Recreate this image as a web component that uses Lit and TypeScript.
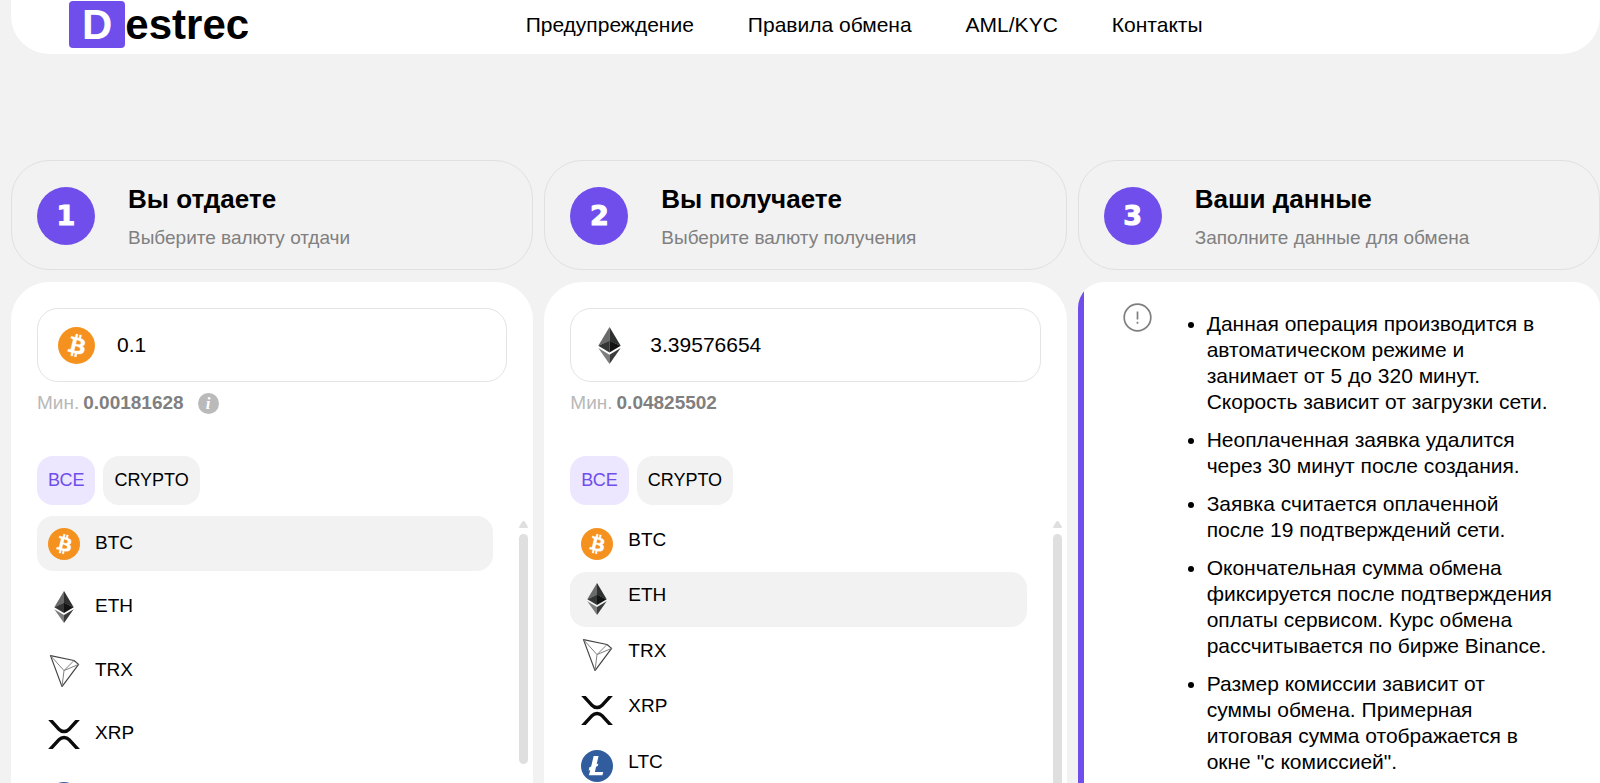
import { LitElement, html, css, svg } from "lit";
import { customElement, property, state } from "lit/decorators.js";
import { classMap } from "lit/directives/class-map.js";

const COINS = ["BTC", "ETH", "TRX", "XRP", "LTC"];

const RULES = [
  "Данная операция производится в автоматическом режиме и занимает от 5 до 320 минут. Скорость зависит от загрузки сети.",
  "Неоплаченная заявка удалится через 30 минут после создания.",
  "Заявка считается оплаченной после 19 подтверждений сети.",
  "Окончательная сумма обмена фиксируется после подтверждения оплаты сервисом. Курс обмена рассчитывается по бирже Binance.",
  'Размер комиссии зависит от суммы обмена. Примерная итоговая сумма отображается в окне "с комиссией".',
];

const SHAPES: Record<string, unknown> = {
  BTC: svg`<circle cx="16" cy="16" r="16" fill="#f5921f"/><path fill="#fff" stroke="#fff" stroke-width=".3" d="M23.189 14.02c.314-2.096-1.283-3.223-3.465-3.975l.708-2.84-1.728-.43-.69 2.765c-.454-.114-.92-.22-1.385-.326l.695-2.783L15.596 6l-.708 2.839c-.376-.086-.746-.17-1.104-.26l.002-.009-2.384-.595-.46 1.846s1.283.294 1.256.312c.7.175.826.638.805 1.006l-.806 3.235c.048.012.11.03.18.057l-.183-.045-1.13 4.532c-.086.212-.303.531-.793.41.018.025-1.256-.313-1.256-.313l-.858 1.978 2.25.561c.418.105.828.215 1.231.318l-.715 2.872 1.727.43.708-2.84c.472.127.93.245 1.378.357l-.706 2.828 1.728.43.715-2.866c2.948.558 5.164.333 6.097-2.333.752-2.146-.037-3.385-1.588-4.192 1.13-.26 1.98-1.003 2.207-2.538zm-3.95 5.538c-.533 2.147-4.148.986-5.32.695l.95-3.805c1.172.293 4.929.872 4.37 3.11zm.535-5.569c-.487 1.953-3.495.96-4.47.717l.86-3.45c.975.243 4.118.696 3.61 2.733z"/>`,
  ETH: svg`<path fill="#6a6a6a" d="M16 0 6.3 16.2 16 12z"/><path fill="#2f3030" d="M16 0v12l9.7 4.2z"/><path fill="#343535" d="M6.3 16.2 16 11.8V22z"/><path fill="#131313" d="M25.7 16.2 16 11.8V22z"/><path fill="#7d7d7d" d="M6.3 18.2 16 23.9V32z"/><path fill="#3a3b3b" d="M25.7 18.2 16 23.9V32z"/>`,
  TRX: svg`<path fill="none" stroke="#444" stroke-width="1.2" stroke-linejoin="round" d="M2.5.6 26 5.5l4.6 3.9L14 31.6z"/><path fill="none" stroke="#808080" stroke-width="1" stroke-linejoin="round" d="M2.5.6 16 15.6 26 5.5M16 15.6l14.6-6.2M16 15.6l-2 16"/>`,
  XRP: svg`<path transform="translate(-9.4 -12) scale(1.59 1.75)" fill="#0b0b0b" d="M23.07 8h2.89l-6.015 5.957a5.621 5.621 0 01-7.89 0L6.035 8H8.93l4.57 4.523a3.556 3.556 0 004.996 0L23.07 8zM8.895 24.563H6l6.055-5.993a5.621 5.621 0 017.89 0L26 24.563h-2.895L18.5 20a3.556 3.556 0 00-4.996 0l-4.61 4.563z"/>`,
  LTC: svg`<circle cx="16" cy="16" r="16" fill="#315d9e"/><path transform="translate(-3.2 -4.2) scale(1.2 1.26)" fill="#fff" d="M10.427 19.214L9 19.768l.688-2.759 1.444-.58L13.213 8h4.1l-1.6 6.6 1.41-.571-.5 2.1-1.427.571-.95 4.1H21.2L20.5 23.4H9.252z"/>`,
};

@customElement("coin-icon")
export class CoinIcon extends LitElement {
  static styles = css`
    :host {
      display: block;
      width: 32px;
      height: 32px;
      flex: none;
    }
    .shape {
      display: block;
      width: 100%;
      height: 100%;
    }
  `;
  @property() coin = "BTC";
  render() {
    return html`<svg class="shape" viewBox="0 0 32 32" aria-hidden="true">${SHAPES[this.coin]}</svg>`;
  }
}

@customElement("step-card")
export class StepCard extends LitElement {
  static styles = css`
    :host {
      display: flex;
      align-items: center;
      gap: 33px;
      box-sizing: border-box;
      height: 110px;
      padding: 2px 25px 0;
      border: 1px solid #e0e0e0;
      border-radius: 38px;
    }
    .number {
      display: grid;
      place-items: center;
      flex: none;
      width: 58px;
      height: 58px;
      border-radius: 50%;
      background: #6f4eec;
      color: #fff;
      font: bold 27px/58px "DejaVu Sans", sans-serif;
      -webkit-text-stroke: 1px #fff;
    }
    .title {
      margin: 0 0 13px;
      font-size: 26px;
      line-height: 30px;
      font-weight: bold;
    }
    .hint {
      margin: 0;
      color: #808080;
      font-size: 19px;
      line-height: 22px;
    }
  `;
  @property() number = "";
  @property() heading = "";
  @property() hint = "";
  render() {
    return html`
      <span class="number">${this.number}</span>
      <div>
        <h2 class="title">${this.heading}</h2>
        <p class="hint">${this.hint}</p>
      </div>
    `;
  }
}

@customElement("currency-panel")
export class CurrencyPanel extends LitElement {
  static styles = css`
    :host {
      display: block;
      box-sizing: border-box;
      padding: 26px 26px 0;
      border-radius: 38px 38px 0 0;
      background: #fff;
    }
    .field {
      display: flex;
      align-items: center;
      gap: 22px;
      box-sizing: border-box;
      height: 74px;
      padding: 0 20px;
      border: 1px solid #e4e4e4;
      border-radius: 21px;
    }
    .field-icon {
      width: 37px;
      height: 37px;
    }
    .amount {
      flex: 1;
      min-width: 0;
      padding: 0;
      border: 0;
      outline: 0;
      background: none;
      color: #000;
      font: inherit;
      font-size: 21px;
    }
    .minimum {
      display: flex;
      align-items: center;
      height: 22px;
      margin: 10px 0 42px;
      color: #b8b8b8;
      font-size: 19px;
    }
    .minimum-value {
      margin-left: 4px;
      color: #808080;
    }
    .info {
      width: 21px;
      height: 21px;
      margin-left: 14px;
      padding: 0;
      border: 0;
      border-radius: 50%;
      background: #bababa;
      color: #fff;
      font: italic bold 17px/21px "Liberation Serif", serif;
    }
    .tabs {
      display: flex;
      gap: 8px;
      margin-bottom: 11px;
    }
    .tab {
      height: 49px;
      padding: 0 11px;
      border: 0;
      border-radius: 16px;
      background: #f2f2f2;
      color: #000;
      font: inherit;
      font-size: 18px;
    }
    .tab.active {
      background: #ece6ff;
      color: #6f4eec;
    }
    .scroller {
      display: flex;
      align-items: flex-start;
      gap: 26px;
      margin-right: -21px;
    }
    .coins {
      display: flex;
      flex-direction: column;
      flex: 1;
      justify-content: space-between;
      height: 309px;
      margin: 0;
      padding: 0;
      list-style: none;
    }
    .coin {
      display: flex;
      align-items: center;
      gap: 15px;
      width: 100%;
      height: 55px;
      padding: 0 11px;
      border: 0;
      border-radius: 16px;
      background: none;
      color: #000;
      font: inherit;
      font-size: 19px;
      text-align: left;
    }
    .coin.chosen {
      background: #f2f2f2;
    }
    .coin-name {
      padding-bottom: 2px;
    }
    .dense .coins {
      height: 277px;
    }
    .dense .coin-name {
      padding-bottom: 8px;
    }
    .scrollbar {
      display: flex;
      flex-direction: column;
      gap: 6px;
      box-sizing: border-box;
      width: 9px;
      height: 256px;
      padding: 5px 0 8px;
    }
    .dense .scrollbar {
      height: 400px;
    }
    .arrow {
      display: block;
      width: 9px;
      height: 7px;
      flex: none;
    }
    .thumb {
      flex: 1;
      border-radius: 5px;
      background: #dfdfdf;
    }
  `;
  @property() label = "";
  @property() coin = "BTC";
  @property() amount = "";
  @property() minimum = "";
  @property({ type: Boolean }) info = false;
  @property({ type: Boolean }) dense = false;
  @state() private tab = "ВСЕ";

  render() {
    return html`
      <label class="field">
        <coin-icon class="field-icon" coin=${this.coin}></coin-icon>
        <input class="amount" type="text" inputmode="decimal" aria-label=${this.label} .value=${this.amount} />
      </label>
      <div class="minimum">
        <span>Мин.</span><b class="minimum-value">${this.minimum}</b>
        ${this.info ? html`<button class="info" type="button">i</button>` : ""}
      </div>
      <div class="tabs">
        ${["ВСЕ", "CRYPTO"].map(
          (t) => html`<button
            type="button"
            class=${classMap({ tab: true, active: t === this.tab })}
            @click=${() => (this.tab = t)}
          >${t}</button>`
        )}
      </div>
      <div class=${classMap({ scroller: true, dense: this.dense })}>
        <ul class="coins">
          ${COINS.map(
            (c) => html`<li>
              <button
                type="button"
                class=${classMap({ coin: true, chosen: c === this.coin })}
                @click=${() => (this.coin = c)}
              >
                <coin-icon coin=${c}></coin-icon><span class="coin-name">${c}</span>
              </button>
            </li>`
          )}
        </ul>
        <div class="scrollbar" aria-hidden="true">
          <svg class="arrow" viewBox="0 0 9 7"><path d="M4.5 0Q5.5 0 6 1l3 5q0 1-1 1H1Q0 7 0 6l3-5q.5-1 1.5-1z" fill="#dfdfdf" /></svg>
          <div class="thumb"></div>
        </div>
      </div>
    `;
  }
}

@customElement("app-root")
export class AppRoot extends LitElement {
  static styles = css`
    :host {
      display: block;
      height: 100vh;
      overflow: hidden;
      background: #f2f2f2;
      color: #000;
      font-family: "Liberation Sans", Arial, sans-serif;
    }
    .header {
      display: flex;
      align-items: center;
      box-sizing: border-box;
      height: 54px;
      margin-left: 11px;
      padding: 0 58px 5px;
      border-radius: 0 0 38px 38px;
      background: #fff;
    }
    .logo {
      display: flex;
      align-items: center;
      flex: 0 0 31%;
      color: #000;
      font-size: 42px;
      font-weight: bold;
      line-height: 47px;
      text-decoration: none;
    }
    .logo-mark {
      padding: 0 13px;
      border-radius: 4px;
      background: #6f4eec;
      color: #fff;
    }
    .nav {
      display: flex;
      gap: 54px;
    }
    .nav-link {
      color: #000;
      font-size: 21px;
      line-height: 24px;
      text-decoration: none;
    }
    .steps {
      display: grid;
      grid-template-columns: repeat(3, minmax(0, 1fr));
      gap: 12px 11px;
      padding: 106px 0 0 11px;
    }
    .notice {
      display: flex;
      align-items: flex-start;
      gap: 32px;
      padding: 21px 46px 0 45px;
      border-radius: 26px 26px 0 0;
      background: linear-gradient(to right, #6f4eec 6px, #fff 6px);
    }
    .notice-icon {
      flex: none;
      width: 29px;
      height: 29px;
    }
    .rules {
      display: flex;
      flex-direction: column;
      gap: 12px;
      margin: 8px 0 0;
      padding-left: 23px;
      font-size: 21px;
      line-height: 26px;
    }
  `;

  render() {
    return html`
      <header class="header">
        <a class="logo" href="#"><span class="logo-mark">D</span><span>estrec</span></a>
        <nav class="nav">
          ${["Предупреждение", "Правила обмена", "AML/KYC", "Контакты"].map(
            (t) => html`<a class="nav-link" href="#">${t}</a>`
          )}
        </nav>
      </header>
      <main class="steps">
        <step-card number="1" heading="Вы отдаете" hint="Выберите валюту отдачи"></step-card>
        <step-card number="2" heading="Вы получаете" hint="Выберите валюту получения"></step-card>
        <step-card number="3" heading="Ваши данные" hint="Заполните данные для обмена"></step-card>
        <currency-panel label="Вы отдаете" coin="BTC" amount="0.1" minimum="0.00181628" info></currency-panel>
        <currency-panel label="Вы получаете" coin="ETH" amount="3.39576654" minimum="0.04825502" dense></currency-panel>
        <section class="notice">
          <svg class="notice-icon" viewBox="0 0 29 29" fill="none" stroke="#7f7f7f" aria-hidden="true">
            <circle cx="14.5" cy="14.5" r="13.3" stroke-width="1.7" />
            <path d="M14.5 8.500v8M14.5 18.8v2" stroke-width="1.7" />
          </svg>
          <ul class="rules">
            ${RULES.map((r) => html`<li>${r}</li>`)}
          </ul>
        </section>
      </main>
    `;
  }
}
